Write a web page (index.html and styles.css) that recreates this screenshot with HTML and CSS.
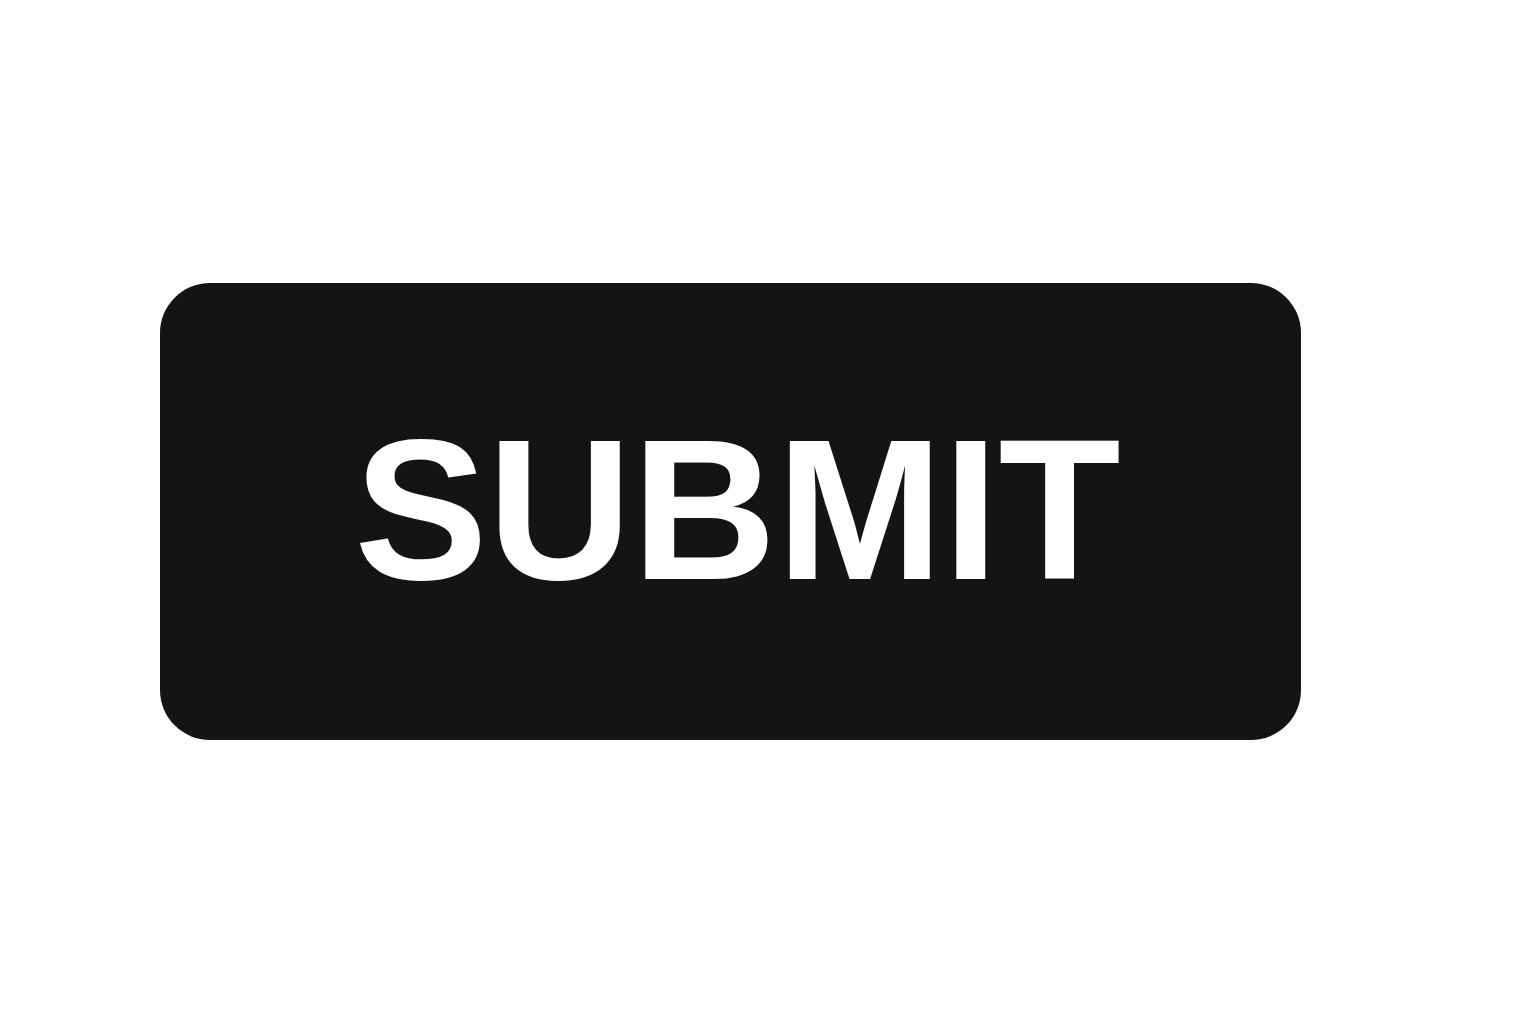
FILE: index.html
```html
<!DOCTYPE html>
<html lang="en">
<head>
    <meta charset="UTF-8">
    <meta name="viewport" content="width=device-width, initial-scale=1.0">
    <title>Submit</title>
    <link rel="stylesheet" href="styles.css">
</head>
<body>
    <div class="stage">
        <button class="submit-btn" type="submit">SUBMIT</button>
    </div>
</body>
</html>
```

FILE: styles.css
```css
* {
    margin: 0;
    padding: 0;
    box-sizing: border-box;
}

:root {
    --background: #fdfdfd;
    --button: #141414;
    --button-text: #ffffff;
    --radius: 50px;
}

body {
    background: var(--background);
    font-family: 'Liberation Sans', Arial, sans-serif;
    min-height: 100vh;
}

.stage {
    padding: 283px 0 0 160px;
}

.submit-btn {
    display: flex;
    align-items: center;
    justify-content: center;
    width: 1141px;
    height: 457px;
    padding: 0 0 4px 14px;
    background: var(--button);
    color: var(--button-text);
    border: none;
    border-radius: var(--radius);
    font-family: inherit;
    font-size: 200px;
    font-weight: 700;
    line-height: 1;
    cursor: pointer;
}
```
